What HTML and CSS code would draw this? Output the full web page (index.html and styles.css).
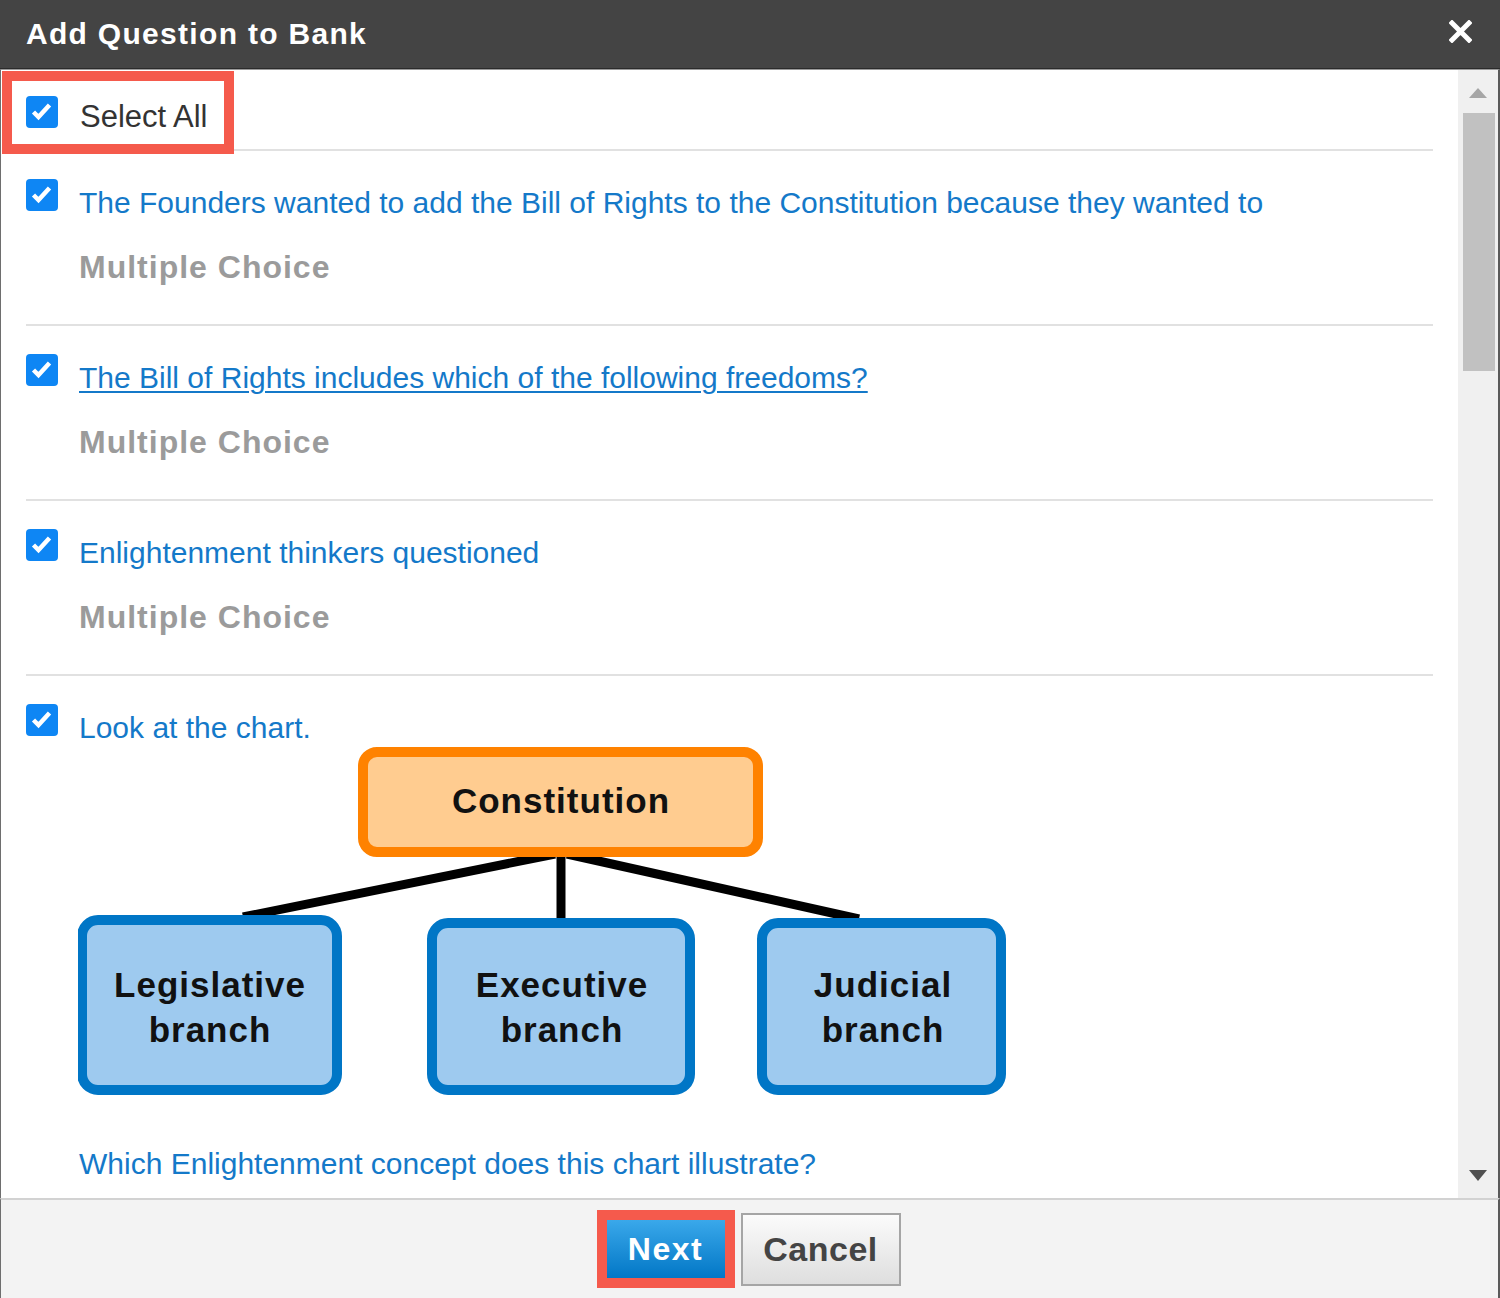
FILE: index.html
```html
<!DOCTYPE html>
<html lang="en">
<head>
<meta charset="utf-8">
<title>Add Question to Bank</title>
<link rel="stylesheet" href="styles.css">
</head>
<body>
<div class="dialog">
  <header class="titlebar">
    <h1 class="title">Add Question to Bank</h1>
    <button class="close" aria-label="Close">
      <svg width="23" height="23" viewBox="0 0 23 23"><path d="M3 3 L20 20 M20 3 L3 20" stroke="#fff" stroke-width="5" stroke-linecap="square"/></svg>
    </button>
  </header>
  <div class="body">
    <div class="content">
      <div class="row select-row">
        <label class="select-all">
          <span class="check"><svg width="32" height="32" viewBox="0 0 32 32"><path d="M7.5 16 L12.5 21 L23.5 9" fill="none" stroke="#fff" stroke-width="4.5"/></svg></span>
          <span class="select-label">Select All</span>
        </label>
      </div>
      <div class="row item">
        <span class="check"><svg width="32" height="32" viewBox="0 0 32 32"><path d="M7.5 16 L12.5 21 L23.5 9" fill="none" stroke="#fff" stroke-width="4.5"/></svg></span>
        <div class="item-body">
          <p class="question">The Founders wanted to add the Bill of Rights to the Constitution because they wanted to</p>
          <p class="qtype">Multiple Choice</p>
        </div>
      </div>
      <div class="row item">
        <span class="check"><svg width="32" height="32" viewBox="0 0 32 32"><path d="M7.5 16 L12.5 21 L23.5 9" fill="none" stroke="#fff" stroke-width="4.5"/></svg></span>
        <div class="item-body">
          <p class="question"><a class="qlink" href="#">The Bill of Rights includes which of the following freedoms?</a></p>
          <p class="qtype">Multiple Choice</p>
        </div>
      </div>
      <div class="row item">
        <span class="check"><svg width="32" height="32" viewBox="0 0 32 32"><path d="M7.5 16 L12.5 21 L23.5 9" fill="none" stroke="#fff" stroke-width="4.5"/></svg></span>
        <div class="item-body">
          <p class="question">Enlightenment thinkers questioned</p>
          <p class="qtype">Multiple Choice</p>
        </div>
      </div>
      <div class="row item">
        <span class="check"><svg width="32" height="32" viewBox="0 0 32 32"><path d="M7.5 16 L12.5 21 L23.5 9" fill="none" stroke="#fff" stroke-width="4.5"/></svg></span>
        <div class="item-body">
          <p class="question">Look at the chart.</p>
          <svg class="chart" width="940" height="360" viewBox="79 744 940 360">
            <g stroke="#000" fill="none">
              <path d="M556 854 L244 917" stroke-width="9"/>
              <path d="M562 854 L562 922" stroke-width="9"/>
              <path d="M568 854 L860 919" stroke-width="9"/>
            </g>
            <rect x="364" y="752" width="395" height="100" rx="14" fill="#ffcc90" stroke="#ff8200" stroke-width="10"/>
            <rect x="83" y="920" width="255" height="170" rx="16" fill="#9ecaef" stroke="#0076c6" stroke-width="10"/>
            <rect x="433" y="923" width="258" height="167" rx="16" fill="#9ecaef" stroke="#0076c6" stroke-width="10"/>
            <rect x="763" y="923" width="239" height="167" rx="16" fill="#9ecaef" stroke="#0076c6" stroke-width="10"/>
            <g class="chart-text" text-anchor="middle">
              <text x="562" y="813">Constitution</text>
              <text x="211" y="997">Legislative</text>
              <text x="211" y="1042">branch</text>
              <text x="563" y="997">Executive</text>
              <text x="563" y="1042">branch</text>
              <text x="884" y="997">Judicial</text>
              <text x="884" y="1042">branch</text>
            </g>
          </svg>
          <p class="question after-chart">Which Enlightenment concept does this chart illustrate?</p>
        </div>
      </div>
    </div>
    <div class="scrollbar">
      <div class="sb-up"><span class="tri-up"></span></div>
      <div class="sb-thumb"></div>
      <div class="sb-space"></div>
      <div class="sb-down"><span class="tri-down"></span></div>
    </div>
  </div>
  <footer class="footer">
    <button class="btn btn-next">Next</button>
    <button class="btn btn-cancel">Cancel</button>
  </footer>
</div>
</body>
</html>
```

FILE: styles.css
```css
*, *::before, *::after { box-sizing: border-box; }
html, body { margin: 0; padding: 0; }
body {
  width: 1500px;
  height: 1298px;
  overflow: hidden;
  background: #fff;
  font-family: "Liberation Sans", Arial, sans-serif;
}
.dialog {
  width: 1500px;
  height: 1298px;
  display: flex;
  flex-direction: column;
}
.titlebar {
  flex: none;
  height: 69px;
  background: #444444;
  border-bottom: 1px solid #2b2b2b;
  display: flex;
  align-items: flex-start;
  justify-content: space-between;
  padding: 0 28px 0 26px;
}
.title {
  margin: 16px 0 0;
  font-size: 30px;
  line-height: 36px;
  font-weight: bold;
  letter-spacing: 1.3px;
  color: #fff;
}
.close {
  margin-top: 20px;
  padding: 0;
  border: none;
  background: none;
  width: 23px;
  height: 23px;
  display: block;
}
.close svg { display: block; }
.body {
  flex: 1;
  min-height: 0;
  display: flex;
  border-top: 1px solid #9a9a9a;
  border-left: 1px solid #6e6e6e;
  border-right: 2px solid #5a5a5a;
}
.content {
  flex: 1;
  min-width: 0;
  overflow: hidden;
  padding: 0 25px;
}
.row {
  display: flex;
  align-items: flex-start;
  border-bottom: 2px solid #e1e1e1;
}
.check {
  flex: none;
  width: 32px;
  height: 32px;
  border-radius: 4px;
  background: #0e86f4;
  display: block;
}
.check svg { display: block; }
.select-row { padding: 26px 0 11px; }
.select-all {
  position: relative;
  display: flex;
  align-items: flex-start;
}
.select-all::after {
  content: "";
  position: absolute;
  left: -24px;
  top: -25px;
  width: 232px;
  height: 83px;
  border: 10px solid #f55a4c;
}
.select-label {
  margin-left: 22px;
  font-size: 31px;
  line-height: 42px;
  color: #333;
}
.item { padding: 28px 0 37px; }
.item-body {
  margin-left: 21px;
  flex: 1;
  min-width: 0;
}
.question {
  margin: 0;
  font-size: 30px;
  line-height: 48px;
  color: #1479c9;
  white-space: nowrap;
}
.qlink {
  color: #1479c9;
  text-decoration: underline;
  text-decoration-thickness: 2px;
  text-underline-offset: 3px;
}
.qtype {
  margin: 20px 0 0;
  font-size: 32px;
  line-height: 40px;
  font-weight: bold;
  letter-spacing: 1px;
  color: #9b9b9b;
}
.chart {
  display: block;
  margin-top: -8px;
  margin-left: -1px;
}
.chart-text {
  font-family: "Liberation Sans", Arial, sans-serif;
  font-weight: bold;
  font-size: 35px;
  letter-spacing: 1px;
  fill: #111;
}
.after-chart { margin-top: 36px; }
.scrollbar {
  flex: none;
  width: 40px;
  background: #f0f0f0;
  display: flex;
  flex-direction: column;
  align-items: center;
}
.sb-up {
  height: 43px;
  display: flex;
  align-items: center;
  justify-content: center;
  padding-top: 3px;
}
.tri-up {
  width: 0;
  height: 0;
  border-left: 9.5px solid transparent;
  border-right: 9.5px solid transparent;
  border-bottom: 10px solid #a6a6a6;
}
.sb-thumb {
  align-self: flex-start;
  margin-left: 5px;
  width: 32px;
  height: 258px;
  background: #c1c1c1;
}
.sb-space { flex: 1; }
.sb-down {
  display: flex;
  justify-content: center;
  padding-bottom: 17px;
}
.tri-down {
  width: 0;
  height: 0;
  border-left: 9px solid transparent;
  border-right: 9px solid transparent;
  border-top: 11px solid #505050;
}
.footer {
  flex: none;
  height: 100px;
  background: #f3f3f3;
  border-top: 2px solid #d2d2d2;
  border-left: 1px solid #6e6e6e;
  border-right: 2px solid #5a5a5a;
  display: flex;
  align-items: center;
  justify-content: center;
  gap: 16px;
  padding-left: 8px;
}
.btn {
  font-family: "Liberation Sans", Arial, sans-serif;
  font-weight: bold;
  padding: 0;
  cursor: pointer;
}
.btn-next {
  width: 118px;
  height: 58px;
  border: none;
  background: linear-gradient(#3aa8ea, #0277c6);
  color: #fff;
  font-size: 32px;
  letter-spacing: 1.5px;
  outline: 10px solid #f55a4c;
}
.btn-cancel {
  width: 160px;
  height: 73px;
  border: 2px solid #a5a5a5;
  background: linear-gradient(#fbfbfb, #dedede);
  color: #444;
  font-size: 34px;
  letter-spacing: 0.5px;
}
```
